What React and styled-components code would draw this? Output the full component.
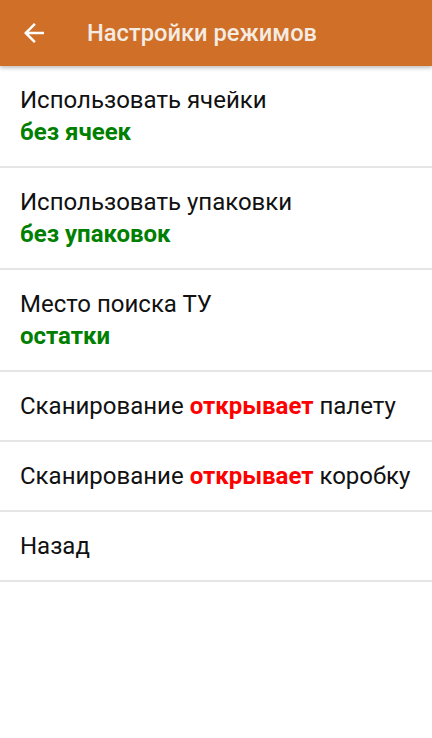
import React from 'react';
import styled, { createGlobalStyle } from 'styled-components';

const GlobalStyle = createGlobalStyle`
  html, body {
    margin: 0;
    padding: 0;
    background: #ffffff;
  }
  body {
    font-family: Roboto, "Noto Sans", "Liberation Sans", sans-serif;
  }
`;

const settings = [
  { title: 'Использовать ячейки', value: 'без ячеек' },
  { title: 'Использовать упаковки', value: 'без упаковок' },
  { title: 'Место поиска ТУ', value: 'остатки' },
];

export default function App() {
  return (
    <>
      <GlobalStyle />
      <Screen>
        <Toolbar>
          <BackButton aria-label='Назад'>
            <svg width='30' height='30' viewBox='0 0 24 24'>
              <path
                fill='#ffffff'
                d='M20 11H7.83l5.59-5.59L12 4l-8 8 8 8 1.41-1.41L7.83 13H20v-2z'
              />
            </svg>
          </BackButton>
          <Title>Настройки режимов</Title>
        </Toolbar>
        <List>
          {settings.map((item) => (
            <Row key={item.title}>
              <Label>{item.title}</Label>
              <Value>{item.value}</Value>
            </Row>
          ))}
          <Row>
            <Label>
              Сканирование <Accent>открывает</Accent> палету
            </Label>
          </Row>
          <Row>
            <Label>
              Сканирование <Accent>открывает</Accent> коробку
            </Label>
          </Row>
          <Row>
            <Label>Назад</Label>
          </Row>
        </List>
      </Screen>
    </>
  );
}

const Screen = styled.div`
  width: 432px;
  min-height: 738px;
  background: #ffffff;
`;

const Toolbar = styled.header`
  position: relative;
  z-index: 1;
  height: 66px;
  display: flex;
  align-items: center;
  background: #cf6f28;
  box-shadow: 0 2px 4px rgba(0, 0, 0, 0.25);
`;

const BackButton = styled.div`
  width: 30px;
  height: 30px;
  margin-left: 19px;
  display: flex;
  align-items: center;
  justify-content: center;
`;

const Title = styled.h1`
  margin: 0 0 0 38px;
  font-size: 23.7px;
  font-weight: 500;
  color: #f4ebe2;
`;

const List = styled.div`
  display: flex;
  flex-direction: column;
`;

const Row = styled.div`
  padding: 18px 20px;
  border-bottom: 2px solid #e6e6e6;
  display: flex;
  flex-direction: column;
`;

const Label = styled.div`
  font-size: 24px;
  line-height: 32px;
  color: #111111;
  white-space: nowrap;
`;

const Value = styled.div`
  font-size: 24px;
  line-height: 32px;
  font-weight: 700;
  color: #007f00;
`;

const Accent = styled.span`
  font-weight: 700;
  color: #ff0000;
`;
